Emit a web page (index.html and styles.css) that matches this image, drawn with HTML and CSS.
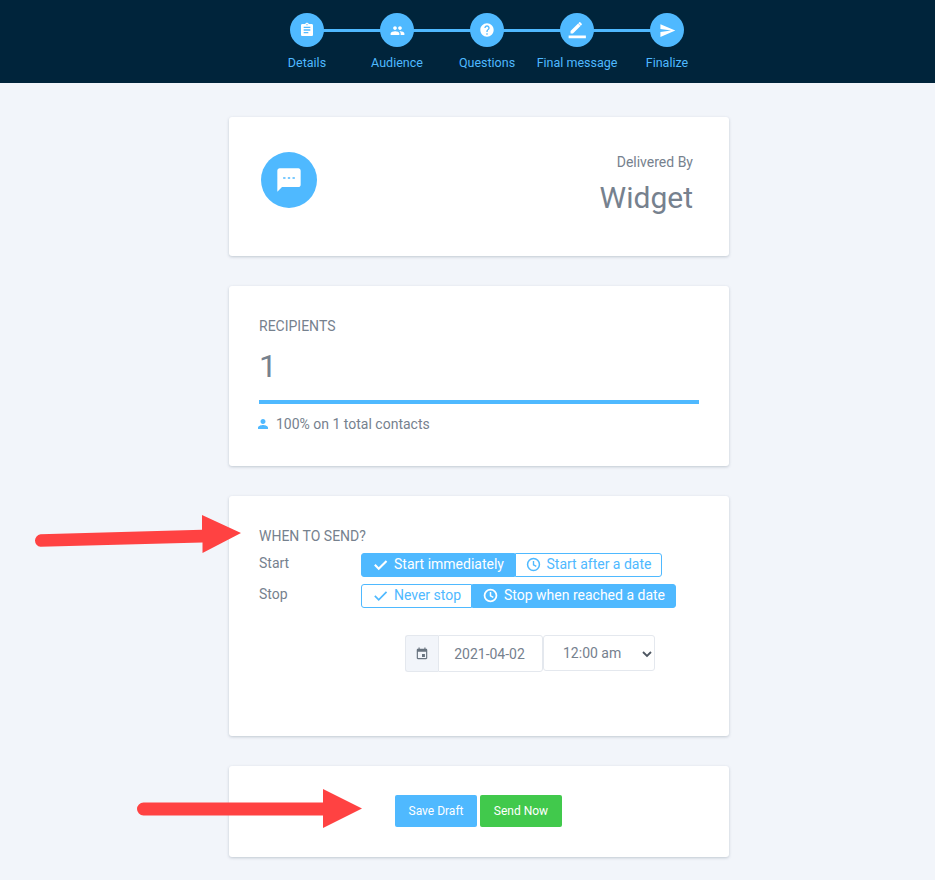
FILE: index.html
```html
<!DOCTYPE html>
<html lang="en">
<head>
<meta charset="utf-8">
<title>Finalize</title>
<link rel="stylesheet" href="styles.css">
</head>
<body>
<header class="topbar">
  <ol class="steps">
    <li class="step">
      <span class="step-dot"><svg width="16" height="16" viewBox="0 0 24 24"><path fill="#fff" d="M19 3h-4.180C14.400 1.840 13.300 1 12 1s-2.400.84-2.820 2H5c-1.100 0-2 .9-2 2v14c0 1.100.9 2 2 2h14c1.100 0 2-.9 2-2V5c0-1.100-.9-2-2-2zm-7 0c.55 0 1 .45 1 1s-.45 1-1 1-1-.45-1-1 .45-1 1-1zm2 14H7v-2h7v2zm3-4H7v-2h10v2zm0-4H7V7h10v2z"/></svg></span>
      <span class="step-label">Details</span>
    </li>
    <li class="step">
      <span class="step-dot"><svg width="15" height="15" viewBox="0 0 24 24"><path fill="#fff" d="M16 11c1.660 0 2.990-1.340 2.990-3S17.660 5 16 5s-3 1.340-3 3 1.340 3 3 3zm-8 0c1.660 0 2.990-1.340 2.990-3S9.660 5 8 5 5 6.340 5 8s1.340 3 3 3zm0 2c-2.330 0-7 1.170-7 3.500V19h14v-2.500C15 14.170 10.330 13 8 13zm8 0c-.29 0-.62.020-.97.050 1.160.84 1.970 1.970 1.970 3.450V19h6v-2.500c0-2.330-4.670-3.500-7-3.500z"/></svg></span>
      <span class="step-label">Audience</span>
    </li>
    <li class="step">
      <span class="step-dot"><svg width="16" height="16" viewBox="0 0 24 24"><path fill="#fff" d="M12 2C6.480 2 2 6.480 2 12s4.480 10 10 10 10-4.480 10-10S17.520 2 12 2zm1 17h-2v-2h2v2zm2.070-7.750l-.9.920C13.450 12.900 13 13.500 13 15h-2v-.5c0-1.100.45-2.100 1.170-2.830l1.240-1.260c.37-.36.590-.86.590-1.410 0-1.100-.9-2-2-2s-2 .9-2 2H8c0-2.210 1.790-4 4-4s4 1.790 4 4c0 .88-.36 1.680-.93 2.250z"/></svg></span>
      <span class="step-label">Questions</span>
    </li>
    <li class="step">
      <span class="step-dot"><svg width="20" height="20" viewBox="0 0 24 24"><path fill="#fff" d="M3 20h18v3H3zM5 15.500V18h2.500l7.900-7.900-2.500-2.500L5 15.500zM16.700 8.800c.26-.26.26-.68 0-.94l-1.560-1.560c-.26-.26-.68-.26-.94 0l-1 1 2.500 2.500 1-1z" transform="translate(-1.500 -4.500) scale(1.150)"/></svg></span>
      <span class="step-label">Final message</span>
    </li>
    <li class="step">
      <span class="step-dot"><svg width="17" height="17" viewBox="0 0 24 24"><path fill="#fff" d="M2.010 21L23 12 2.010 3 2 10l15 2-15 2z"/></svg></span>
      <span class="step-label">Finalize</span>
    </li>
  </ol>
</header>

<main class="content">
  <section class="card card-delivery">
    <span class="channel-icon"><svg width="28" height="28" viewBox="0 0 24 24"><path fill="#fff" d="M20 2H4c-1.100 0-2 .9-2 2v18l4-4h14c1.100 0 2-.9 2-2V4c0-1.100-.9-2-2-2zM9 11H7V9.600h2V11zm4 0h-2V9.600h2V11zm4 0h-2V9.600h2V11z"/></svg></span>
    <div class="delivery-text">
      <div class="delivery-label">Delivered By</div>
      <div class="delivery-value">Widget</div>
    </div>
  </section>

  <section class="card card-recipients">
    <h2 class="card-title">RECIPIENTS</h2>
    <div class="recipient-count">1</div>
    <div class="progress"></div>
    <div class="recipient-note">
      <svg width="12" height="12" viewBox="0 0 24 24"><path fill="#4fb9ff" d="M12 12c2.900 0 5-2.100 5-5s-2.100-5-5-5-5 2.100-5 5 2.100 5 5 5zm0 2c-3.300 0-10 1.700-10 5v3h20v-3c0-3.300-6.700-5-10-5z"/></svg>
      <span>100% on 1 total contacts</span>
    </div>
  </section>

  <section class="card card-schedule">
    <h2 class="card-title">WHEN TO SEND?</h2>
    <div class="schedule-row">
      <span class="schedule-label">Start</span>
      <div class="toggle">
        <span class="toggle-item active toggle-a">
          <svg width="17" height="17" viewBox="0 0 24 24"><path fill="none" stroke="currentColor" stroke-width="3" d="M4 12.500l5.500 5.500L20.500 7"/></svg>Start immediately
        </span>
        <span class="toggle-item toggle-b">
          <svg width="15" height="15" viewBox="0 0 24 24"><circle cx="12" cy="12" r="9.500" fill="none" stroke="currentColor" stroke-width="2.400"/><path fill="none" stroke="currentColor" stroke-width="2.200" d="M12 6.500V12.500l4.500 2.600"/></svg>Start after a date
        </span>
      </div>
    </div>
    <div class="schedule-row">
      <span class="schedule-label">Stop</span>
      <div class="toggle">
        <span class="toggle-item toggle-c">
          <svg width="17" height="17" viewBox="0 0 24 24"><path fill="none" stroke="currentColor" stroke-width="2.400" d="M4 12.500l5.500 5.500L20.500 7"/></svg>Never stop
        </span>
        <span class="toggle-item active toggle-d">
          <svg width="15" height="15" viewBox="0 0 24 24"><circle cx="12" cy="12" r="9.500" fill="none" stroke="currentColor" stroke-width="2.800"/><path fill="none" stroke="currentColor" stroke-width="2.400" d="M12 6.500V12.500l4.500 2.600"/></svg>Stop when reached a date
        </span>
      </div>
    </div>
    <div class="date-row">
      <span class="date-addon"><svg width="14" height="14" viewBox="0 0 24 24"><path fill="#68737f" d="M17 12h-5v5h5v-5zM16 1v2H8V1H6v2H5c-1.100 0-2 .9-2 2v14c0 1.100.9 2 2 2h14c1.100 0 2-.9 2-2V5c0-1.100-.9-2-2-2h-1V1h-2zm3 18H5V8h14v11z"/></svg></span>
      <span class="date-input">2021-04-02</span>
      <span class="time-select">12:00 am
        <svg class="chevron" width="12" height="12" viewBox="0 0 12 12"><path fill="none" stroke="#4d5661" stroke-width="1.800" d="M2 4l4 4 4-4"/></svg>
      </span>
    </div>
  </section>

  <section class="card card-actions">
    <button class="btn btn-draft" type="button">Save Draft</button>
    <button class="btn btn-send" type="button">Send Now</button>
  </section>
</main>

<svg class="annotation arrow-one" width="212" height="42" viewBox="0 0 212 42"><path fill="#ff4242" d="M6.500 19.300L168 14.800V0L207 18 168.500 38V27.500L6.500 31.800A6.300 6.300 0 0 1 6.500 19.300Z"/></svg>
<svg class="annotation arrow-two" width="228" height="42" viewBox="0 0 228 42"><path fill="#ff4242" d="M6.500 13.500H186V0L225 19.500 186 39V26.500H6.500A6.500 6.500 0 0 1 6.500 13.500Z"/></svg>
</body>
</html>
```

FILE: styles.css
```css
* { box-sizing: border-box; }

html, body {
  margin: 0;
  padding: 0;
}

body {
  position: relative;
  min-height: 880px;
  background: #f2f5fa;
  font-family: Roboto, "Liberation Sans", sans-serif;
  color: #76818e;
  overflow: hidden;
}

.topbar {
  height: 83px;
  background: #00243b;
}

.steps {
  display: flex;
  justify-content: center;
  margin: 0;
  padding: 13px 0 0 39px;
  list-style: none;
}

.step {
  position: relative;
  width: 90px;
  display: flex;
  flex-direction: column;
  align-items: center;
}

.step + .step::before {
  content: "";
  position: absolute;
  top: 16px;
  right: 50%;
  width: 90px;
  height: 3px;
  background: #4fb9ff;
}

.step-dot {
  position: relative;
  z-index: 1;
  width: 34px;
  height: 34px;
  border-radius: 50%;
  background: #4fb9ff;
  display: flex;
  align-items: center;
  justify-content: center;
}

.step-label {
  margin-top: 8px;
  font-size: 12.500px;
  line-height: 16px;
  color: #4fb9ff;
  white-space: nowrap;
}

.content {
  width: 500px;
  margin: 34px auto 0 229px;
  display: flex;
  flex-direction: column;
  gap: 30px;
}

.card {
  background: #fff;
  border-radius: 3px;
  box-shadow: 0 1px 3px rgba(90, 105, 125, .32);
}

.card-delivery {
  height: 139px;
  padding: 35px 36px 0 32px;
  display: flex;
  justify-content: space-between;
  align-items: flex-start;
}

.channel-icon {
  width: 56px;
  height: 56px;
  border-radius: 50%;
  background: #4fb9ff;
  display: flex;
  align-items: center;
  justify-content: center;
}

.delivery-text {
  text-align: right;
}

.delivery-label {
  font-size: 14px;
  line-height: 20px;
}

.delivery-value {
  margin-top: 7px;
  font-size: 30px;
  line-height: 38px;
}

.card-recipients {
  height: 180px;
  padding: 31px 30px 0;
}

.card-title {
  margin: 0;
  font-size: 14px;
  font-weight: 400;
  line-height: 18px;
}

.recipient-count {
  margin-top: 11px;
  font-size: 32px;
  line-height: 40px;
}

.progress {
  height: 4px;
  margin-top: 14px;
  background: #4fb9ff;
}

.recipient-note {
  margin-top: 11px;
  display: flex;
  align-items: center;
  gap: 7px;
  font-size: 14px;
  line-height: 18px;
}

.recipient-note svg {
  margin-left: -2px;
}

.card-schedule {
  height: 240px;
  padding: 31px 30px 0;
}

.schedule-row {
  display: flex;
  align-items: flex-start;
  margin-top: 7px;
}

.card-title + .schedule-row {
  margin-top: 8px;
}

.schedule-label {
  width: 102px;
  font-size: 14px;
  line-height: 18px;
  margin-top: 1px;
}

.toggle {
  display: flex;
  height: 24px;
  font-size: 14px;
}

.toggle-item {
  display: flex;
  align-items: center;
  justify-content: center;
  gap: 5px;
  padding-bottom: 2px;
  color: #4fb9ff;
  border: 1px solid #4fb9ff;
  white-space: nowrap;
}

.toggle-item.active {
  background: #4fb9ff;
  color: #fff;
}

.toggle-item:first-child {
  border-radius: 3px 0 0 3px;
}

.toggle-item:last-child {
  border-radius: 0 3px 3px 0;
}

.toggle-a { width: 154px; }
.toggle-b { width: 147px; gap: 6px; }
.toggle-c { width: 111px; }
.toggle-d { width: 204px; gap: 6px; }

.date-row {
  display: flex;
  height: 37px;
  margin: 27px 0 0 146px;
  font-size: 14px;
}

.date-addon {
  width: 33px;
  background: #f2f5fa;
  border: 1px solid #e4e8ee;
  border-right: 0;
  border-radius: 3px 0 0 3px;
  display: flex;
  align-items: center;
  justify-content: center;
}

.date-input {
  width: 105px;
  padding-right: 2px;
  border: 1px solid #e4e8ee;
  border-radius: 0 3px 3px 0;
  display: flex;
  align-items: center;
  justify-content: center;
}

.time-select {
  position: relative;
  width: 112px;
  height: 36px;
  padding-left: 19px;
  border: 1px solid #e4e8ee;
  border-radius: 3px;
  display: flex;
  align-items: center;
}

.chevron {
  position: absolute;
  right: 1px;
  top: 12px;
}

.card-actions {
  height: 91px;
  padding: 29px 0 0 166px;
  display: flex;
  align-items: flex-start;
  gap: 3px;
}

.btn {
  width: 82px;
  height: 32px;
  padding: 0;
  border: 0;
  border-radius: 2px;
  font-family: inherit;
  font-size: 12px;
  color: #fff;
}

.btn-draft { background: #4fb9ff; }
.btn-send { background: #41c94c; }

.annotation {
  position: absolute;
}

.arrow-one {
  left: 34px;
  top: 515px;
}

.arrow-two {
  left: 137px;
  top: 789px;
}
```
